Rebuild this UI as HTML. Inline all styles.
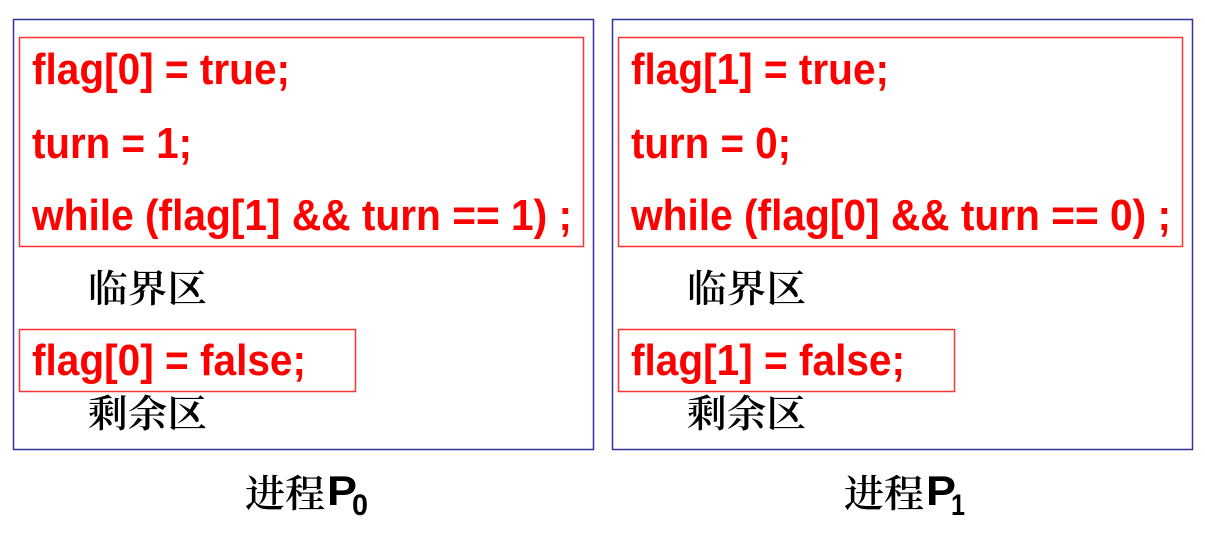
<!DOCTYPE html>
<html><head><meta charset="utf-8"><style>
html,body{margin:0;padding:0;background:#fff;width:1205px;height:538px;overflow:hidden}
svg{display:block}
.c{font-family:"Liberation Sans",Arial,sans-serif;font-weight:bold;font-size:44px;fill:#ff0000}
.z{font-family:"Noto Serif CJK SC","Noto Sans CJK SC",serif;font-size:38px;font-weight:600;fill:#000}
.p{font-family:"Liberation Sans",Arial,sans-serif;font-weight:bold;fill:#000}
</style></head><body>
<svg width="1205" height="538" xmlns="http://www.w3.org/2000/svg">
<g>
<rect x="13.5" y="19.5" width="580" height="430" fill="none" stroke="#333399" stroke-width="1.5"/>
<rect x="19.5" y="37.5" width="564" height="209" fill="none" stroke="#ff3333" stroke-width="1.5"/>
<rect x="19.5" y="329.5" width="336" height="62" fill="none" stroke="#ff3333" stroke-width="1.5"/>
<text class="c" x="32" y="84" textLength="258" lengthAdjust="spacingAndGlyphs">flag[0] = true;</text>
<text class="c" x="32" y="158" textLength="160" lengthAdjust="spacingAndGlyphs">turn = 1;</text>
<text class="c" x="32" y="230" textLength="540" lengthAdjust="spacingAndGlyphs">while (flag[1] &amp;&amp; turn == 1) ;</text>
<text class="z" x="88" y="302" textLength="119" lengthAdjust="spacingAndGlyphs">临界区</text>
<text class="c" x="32" y="375" textLength="274" lengthAdjust="spacingAndGlyphs">flag[0] = false;</text>
<text class="z" x="88" y="427" textLength="119" lengthAdjust="spacingAndGlyphs">剩余区</text>
<text class="z" x="245" y="507" textLength="80" lengthAdjust="spacingAndGlyphs">进程</text>
<text class="p" x="327" y="505" font-size="42" textLength="30" lengthAdjust="spacingAndGlyphs">P</text>
<text class="p" x="352" y="515" font-size="30" textLength="16" lengthAdjust="spacingAndGlyphs">0</text>
</g>
<g transform="translate(599,0)">
<rect x="13.5" y="19.5" width="580" height="430" fill="none" stroke="#333399" stroke-width="1.5"/>
<rect x="19.5" y="37.5" width="564" height="209" fill="none" stroke="#ff3333" stroke-width="1.5"/>
<rect x="19.5" y="329.5" width="336" height="62" fill="none" stroke="#ff3333" stroke-width="1.5"/>
<text class="c" x="32" y="84" textLength="258" lengthAdjust="spacingAndGlyphs">flag[1] = true;</text>
<text class="c" x="32" y="158" textLength="160" lengthAdjust="spacingAndGlyphs">turn = 0;</text>
<text class="c" x="32" y="230" textLength="540" lengthAdjust="spacingAndGlyphs">while (flag[0] &amp;&amp; turn == 0) ;</text>
<text class="z" x="88" y="302" textLength="119" lengthAdjust="spacingAndGlyphs">临界区</text>
<text class="c" x="32" y="375" textLength="274" lengthAdjust="spacingAndGlyphs">flag[1] = false;</text>
<text class="z" x="88" y="427" textLength="119" lengthAdjust="spacingAndGlyphs">剩余区</text>
<text class="z" x="245" y="507" textLength="80" lengthAdjust="spacingAndGlyphs">进程</text>
<text class="p" x="327" y="505" font-size="42" textLength="30" lengthAdjust="spacingAndGlyphs">P</text>
<text class="p" x="352" y="515" font-size="30" textLength="14" lengthAdjust="spacingAndGlyphs">1</text>
</g>
</svg>
</body></html>
